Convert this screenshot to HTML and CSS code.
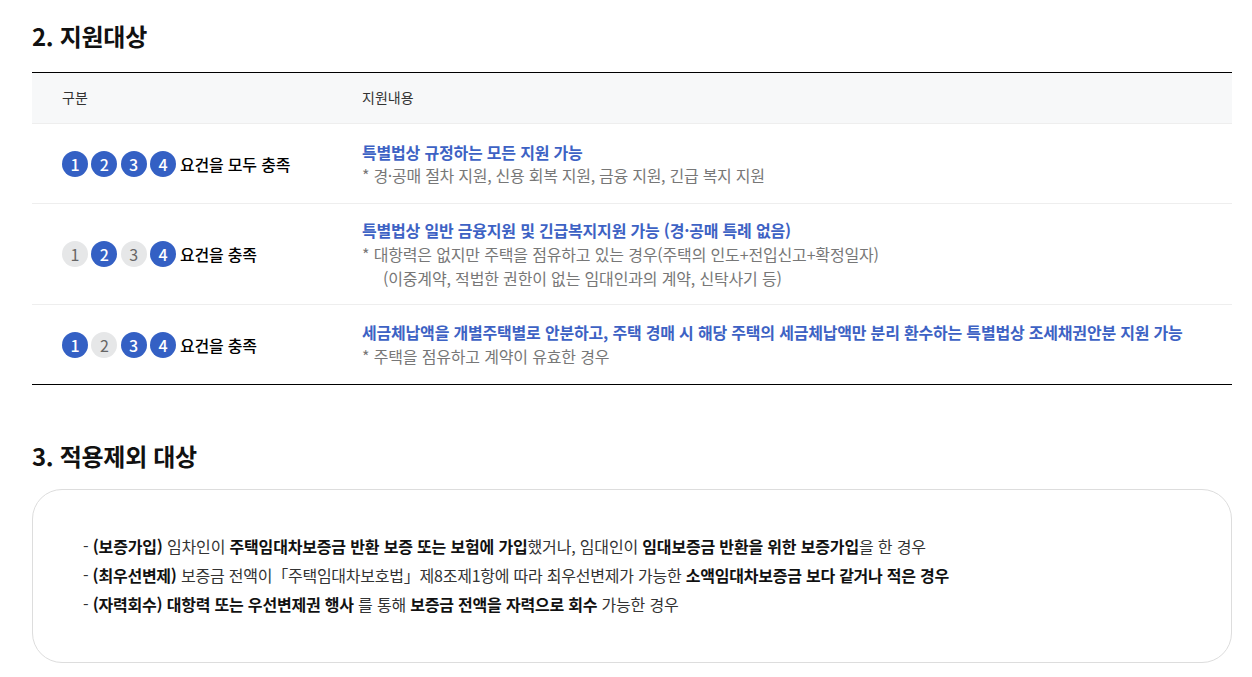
FILE: index.html
```html
<!DOCTYPE html>
<html lang="ko">
<head>
<meta charset="utf-8">
<title>지원대상</title>
<link rel="stylesheet" href="styles.css">
</head>
<body>
<h2 class="heading first">2. 지원대상</h2>
<div class="table">
  <div class="row head"><div class="c1">구분</div><div class="c2">지원내용</div></div>
  <div class="row r1">
    <div class="c1 req"><span class="n on">1</span><span class="n on">2</span><span class="n on">3</span><span class="n on">4</span><strong>요건을 모두 충족</strong></div>
    <div class="c2"><p class="t">특별법상 규정하는 모든 지원 가능</p><p class="d tight">* 경·공매 절차 지원, 신용 회복 지원, 금융 지원, 긴급 복지 지원</p></div>
  </div>
  <div class="row r2">
    <div class="c1 req"><span class="n">1</span><span class="n on">2</span><span class="n">3</span><span class="n on">4</span><strong>요건을 충족</strong></div>
    <div class="c2"><p class="t">특별법상 일반 금융지원 및 긴급복지지원 가능 (경·공매 특례 없음)</p><p class="d">* 대항력은 없지만 주택을 점유하고 있는 경우(주택의 인도+전입신고+확정일자)</p><p class="d ind">(이중계약, 적법한 권한이 없는 임대인과의 계약, 신탁사기 등)</p></div>
  </div>
  <div class="row r3">
    <div class="c1 req"><span class="n on">1</span><span class="n">2</span><span class="n on">3</span><span class="n on">4</span><strong>요건을 충족</strong></div>
    <div class="c2"><p class="t">세금체납액을 개별주택별로 안분하고, 주택 경매 시 해당 주택의 세금체납액만 분리 환수하는 특별법상 조세채권안분 지원 가능</p><p class="d">* 주택을 점유하고 계약이 유효한 경우</p></div>
  </div>
</div>
<h2 class="heading second">3. 적용제외 대상</h2>
<div class="box">
  <p>- <b>(보증가입)</b> 임차인이 <b>주택임대차보증금 반환 보증 또는 보험에 가입</b>했거나, 임대인이 <b>임대보증금 반환을 위한 보증가입</b>을 한 경우</p>
  <p class="tight2">- <b>(최우선변제)</b> 보증금 전액이「주택임대차보호법」제8조제1항에 따라 최우선변제가 가능한 <b>소액임대차보증금 보다 같거나 적은 경우</b></p>
  <p class="tight3">- <b>(자력회수) 대항력 또는 우선변제권 행사</b> 를 통해 <b>보증금 전액을 자력으로 회수</b> 가능한 경우</p>
</div>
</body>
</html>
```
FILE: styles.css
```css
* { box-sizing: border-box; }
html, body { margin: 0; padding: 0; }
body {
  background: #fff;
  padding: 0 20px 0 32px;
  font-family: "Noto Sans CJK KR", "Noto Sans", sans-serif;
  color: #000;
  overflow: hidden;
  height: 677px;
}
p { margin: 0; }
.heading { margin: 0; font-size: 24px; font-weight: 700; line-height: 36px; color: #111; letter-spacing: -0.3px; }
.first { padding-top: 18px; height: 72px; }
.second { margin-top: 53px; height: 51px; }
.table { border-top: 1px solid #000; border-bottom: 1px solid #000; }
.row { display: flex; align-items: center; border-bottom: 1px solid #eee; }
.row:last-child { border-bottom: 0; }
.head { height: 51px; padding-bottom: 2px; background: #f7f8f9; font-size: 14px; color: #333; }
.r1 { height: 80px; }
.r1 .c2 { padding-bottom: 1px; }
.r1 .t { margin-bottom: -1px; }
.r2 { height: 101px; }
.r3 { height: 79px; }
.r3 .c2 { padding-bottom: 2px; }
.c1 { width: 330px; padding-left: 30px; flex: none; }
.c2 { flex: 1; }
.req { display: flex; align-items: center; gap: 3.33px; font-size: 16px; }
.req strong { margin-left: 0.67px; font-weight: 500; letter-spacing: -0.2px; }
.n { width: 26px; height: 26px; border-radius: 50%; background: #e6e7e8; color: #666; font-size: 16px; display: flex; align-items: center; justify-content: center; }
.n.on { background: #3460c4; color: #fff; font-weight: 500; }
.t { font-size: 16px; font-weight: 700; color: #3d62c4; line-height: 24px; letter-spacing: -0.19px; }
.d { font-size: 16px; color: #777; line-height: 24px; letter-spacing: -0.16px; }
.tight { letter-spacing: -0.27px; }
.ind { padding-left: 21px; }
.box { height: 174px; border: 1px solid #ddd; border-radius: 30px; padding: 42px 50px; font-size: 16px; line-height: 29px; color: #333; letter-spacing: -0.17px; }
.box b { font-weight: 700; color: #111; }
.tight2 { letter-spacing: -0.23px; }
.tight3 { letter-spacing: -0.2px; }
```
